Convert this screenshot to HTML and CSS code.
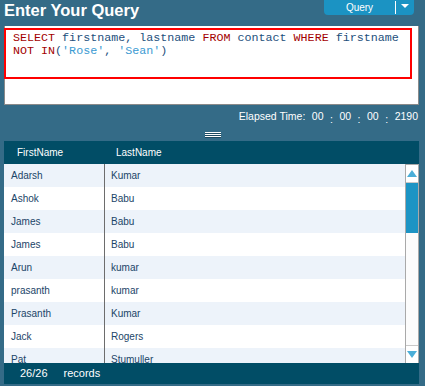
FILE: index.html
```html
<!DOCTYPE html>
<html lang="en">
  <head>
    <meta charset="UTF-8" />
    <title>Query</title>
    <link rel="stylesheet" href="styles.css">
  </head>
  <body>
    <div class="topbar">
      <h1 class="title">Enter Your Query</h1>
      <div class="query-btn">
        <span class="query-label">Query</span>
        <span class="query-drop"><span class="tri-down"></span></span>
      </div>
    </div>

    <div class="editor">
      <div class="sql">
        <span class="kw">SELECT</span> <span class="id">firstname, lastname</span> <span class="kw">FROM</span> <span class="id">contact</span> <span class="kw">WHERE</span> <span class="id">firstname</span><br>
        <span class="kw">NOT IN</span><span class="id">(</span><span class="str">'Rose'</span><span class="id">, </span><span class="str">'Sean'</span><span class="id">)</span>
      </div>
    </div>

    <div class="elapsed">
      <span>Elapsed Time:</span>
      <span>00</span><span class="colon">:</span>
      <span>00</span><span class="colon">:</span>
      <span>00</span><span class="colon">:</span>
      <span>2190</span>
    </div>

    <div class="grip"><i></i><i></i><i></i></div>

    <div class="grid">
      <div class="grid-head">
        <div class="hcell first">FirstName</div>
        <div class="hcell">LastName</div>
      </div>
      <div class="grid-body">
        <div class="rows">
          <div class="row alt"><div class="cell first">Adarsh</div><div class="cell">Kumar</div></div>
          <div class="row"><div class="cell first">Ashok</div><div class="cell">Babu</div></div>
          <div class="row alt"><div class="cell first">James</div><div class="cell">Babu</div></div>
          <div class="row"><div class="cell first">James</div><div class="cell">Babu</div></div>
          <div class="row alt"><div class="cell first">Arun</div><div class="cell">kumar</div></div>
          <div class="row"><div class="cell first">prasanth</div><div class="cell">kumar</div></div>
          <div class="row alt"><div class="cell first">Prasanth</div><div class="cell">Kumar</div></div>
          <div class="row"><div class="cell first">Jack</div><div class="cell">Rogers</div></div>
          <div class="row alt"><div class="cell first">Pat</div><div class="cell">Stumuller</div></div>
        </div>
        <div class="scrollbar">
          <div class="sb-btn"><span class="tri-up"></span></div>
          <div class="sb-thumb"></div>
          <div class="sb-track"></div>
          <div class="sb-btn"><span class="tri-down blue"></span></div>
        </div>
      </div>
      <div class="grid-foot">
        <span>26/26</span>
        <span>records</span>
      </div>
    </div>
  </body>
</html>
```

FILE: styles.css
```css
body {
  margin: 0;
  background-color: #346b87;
  font-family: "Liberation Sans", Arial, sans-serif;
  color: #ffffff;
}

.topbar {
  display: flex;
  justify-content: space-between;
  align-items: flex-start;
  height: 26px;
  padding: 0 11px 0 4px;
}

.title {
  margin: 0;
  font-size: 16.5px;
  line-height: 20px;
  font-weight: bold;
  color: #ffffff;
}

.query-btn {
  display: flex;
  width: 90px;
  height: 15px;
  background-color: #1b93c3;
  border-radius: 0 0 4px 4px;
  font-size: 10px;
}

.query-label {
  flex: 1;
  text-align: center;
  line-height: 13px;
  border-right: 1px solid #ffffff;
  margin: 1px 0;
}

.query-drop {
  width: 18px;
  display: flex;
  justify-content: center;
  padding-top: 4px;
  box-sizing: border-box;
}

.tri-down {
  width: 0;
  height: 0;
  border-left: 4px solid transparent;
  border-right: 4px solid transparent;
  border-top: 4px solid #ffffff;
}

.tri-down.blue {
  border-top-color: #4aaed8;
  border-left-width: 5px;
  border-right-width: 5px;
  border-top-width: 7px;
}

.tri-up {
  width: 0;
  height: 0;
  border-left: 5px solid transparent;
  border-right: 5px solid transparent;
  border-bottom: 7px solid #4aaed8;
}

/* query editor */
.editor {
  margin-left: 4px;
  width: 415px;
  height: 79px;
  box-sizing: border-box;
  background-color: #ffffff;
  border: 1px solid #8a8a8a;
  border-top: none;
  padding-top: 2px;
}

.sql {
  margin-left: -1px;
  width: 408px;
  height: 51px;
  box-sizing: border-box;
  border: 2px solid #ff0000;
  padding: 2px 7px;
  font-family: "Liberation Mono", "Courier New", monospace;
  font-size: 11.7px;
  line-height: 13px;
  white-space: nowrap;
}

.kw {
  color: #a30000;
}

.id {
  color: #1d4f7c;
}

.str {
  color: #3a9ad2;
}

.elapsed {
  display: flex;
  justify-content: flex-end;
  align-items: flex-start;
  gap: 6.5px;
  height: 26px;
  padding: 5px 7px 0 0;
  box-sizing: border-box;
  font-size: 10.5px;
  line-height: 12px;
}

.colon {
  margin-top: 3px;
}

.grip {
  display: flex;
  flex-direction: column;
  align-items: center;
  gap: 1px;
  height: 10px;
  padding-top: 1px;
  box-sizing: border-box;
}

.grip i {
  display: block;
  width: 16px;
  height: 1px;
  background-color: #ffffff;
  box-shadow: 0 1px 0 #1d4a60;
}

/* result grid */
.grid {
  margin-left: 4px;
  width: 415px;
}

.grid-head {
  display: flex;
  height: 23px;
  background-color: #014d66;
  font-size: 10px;
  line-height: 23px;
}

.hcell {
  padding-left: 11px;
}

.hcell.first {
  width: 101px;
  box-sizing: border-box;
  padding-left: 13px;
}

.grid-body {
  display: flex;
  height: 199px;
  overflow: hidden;
}

.rows {
  flex: 1;
}

.row {
  display: flex;
  height: 23px;
  background-color: #ffffff;
  color: #1b4568;
  font-size: 10px;
  line-height: 23px;
}

.row.alt {
  background-color: #edf3fa;
}

.cell {
  padding-left: 6px;
}

.cell.first {
  width: 101px;
  box-sizing: border-box;
  padding-left: 7px;
  border-right: 1px solid #6d6d6d;
}

.scrollbar {
  width: 14px;
  display: flex;
  flex-direction: column;
  background-color: #ffffff;
  border: 1px solid #a9a9a9;
  border-bottom: none;
  box-sizing: border-box;
}

.sb-btn {
  height: 17px;
  display: flex;
  justify-content: center;
  align-items: center;
  background-color: #ffffff;
  border-bottom: 1px solid #c8c8c8;
}

.sb-btn:last-child {
  border-bottom: none;
  border-top: 1px solid #c8c8c8;
}

.sb-thumb {
  height: 50px;
  background-color: #1c94c4;
}

.sb-track {
  flex: 1;
  background-color: #fcfcfc;
}

.grid-foot {
  display: flex;
  gap: 16px;
  height: 21px;
  padding-left: 16px;
  background-color: #014d66;
  font-size: 11px;
  line-height: 21px;
}
```
